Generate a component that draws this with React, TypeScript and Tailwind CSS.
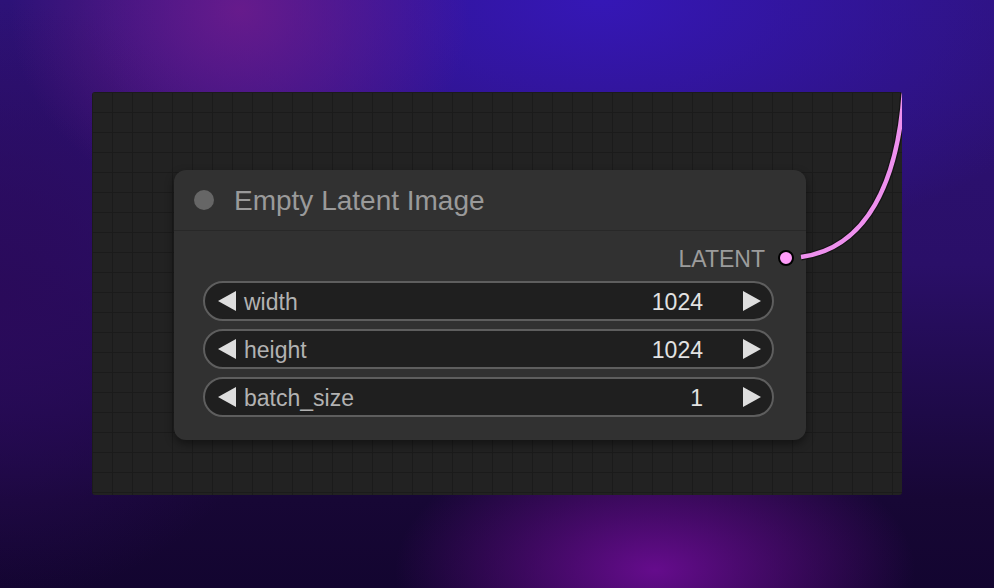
import React from 'react';

const widgets = [
  { name: 'width', value: '1024' },
  { name: 'height', value: '1024' },
  { name: 'batch_size', value: '1' },
];

const Arrow: React.FC<{ dir: 'left' | 'right' }> = ({ dir }) => (
  <svg width="20" height="22" viewBox="0 0 20 22" className="shrink-0">
    {dir === 'left' ? (
      <polygon points="19,1 19,21 1,11" fill="#dedede" />
    ) : (
      <polygon points="1,1 1,21 19,11" fill="#dedede" />
    )}
  </svg>
);

const App: React.FC = () => {
  return (
    <div
      className="w-[994px] h-[588px] overflow-hidden pt-[92px] pl-[92px] font-['Liberation_Sans',Arial,sans-serif] bg-[radial-gradient(ellipse_230px_200px_at_240px_10px,rgba(112,28,140,0.85),transparent),radial-gradient(ellipse_520px_260px_at_600px_0px,#3517b6,transparent),radial-gradient(ellipse_260px_140px_at_655px_570px,#650c8c,transparent),radial-gradient(ellipse_300px_300px_at_0px_300px,#2a0a5a,transparent),linear-gradient(180deg,#2d1278_0%,#2a0f68_45%,#170735_85%,#130530_100%)]"
    >
      <div className="relative w-[810px] h-[403px] overflow-hidden rounded-[3px] bg-[#222222] bg-[linear-gradient(#1b1b1b_1px,transparent_1px),linear-gradient(90deg,#1b1b1b_1px,transparent_1px)] bg-[size:20px_20px]">
        {/* node */}
        <div className="absolute left-[82px] top-[78px] w-[632px] rounded-[12px] bg-[#313131] shadow-[0_4px_10px_rgba(0,0,0,0.45)]">
          <div className="h-[61px] flex items-center pl-[20px] gap-[20px] border-b border-[#282828]">
            <div className="w-[20px] h-[20px] rounded-full bg-[#666666]" />
            <span className="text-[28px] text-[#9a9a9a] leading-none pt-[2px]">Empty Latent Image</span>
          </div>
          <div className="pt-[12px] pb-[23px]">
            <div className="h-[30px] flex items-center justify-end pr-[12px] gap-[13px]">
              <span className="text-[23px] text-[#9c9c9c] leading-none pt-[2px]">LATENT</span>
              <div className="w-[16px] h-[16px] rounded-full bg-[#ff9cf9] border-2 border-black" />
            </div>
            <div className="mt-[8px] pl-[29px] pr-[32px] flex flex-col gap-[8px]">
              {widgets.map((w) => (
                <div
                  key={w.name}
                  className="h-[40px] rounded-full border-2 border-[#5e5e5e] bg-[#1f1f1f] flex items-center pl-[12px] pr-[10px]"
                >
                  <Arrow dir="left" />
                  <span className="ml-[7px] text-[23px] text-[#b2b2b2] leading-none pt-[2px]">{w.name}</span>
                  <span className="ml-auto text-[23px] text-[#e2e2e2] leading-none pt-[2px]">{w.value}</span>
                  <div className="ml-[39px]">
                    <Arrow dir="right" />
                  </div>
                </div>
              ))}
            </div>
          </div>
        </div>
        {/* link wire */}
        <svg className="absolute inset-0 pointer-events-none" width="810" height="403" viewBox="0 0 810 403">
          <path d="M 709 165 C 775 156, 806 90, 812 -2" stroke="#141414" strokeWidth="7" fill="none" />
          <path d="M 709 165 C 775 156, 806 90, 812 -2" stroke="#ee90ee" strokeWidth="4.5" fill="none" />
        </svg>
      </div>
    </div>
  );
};

export default App;
